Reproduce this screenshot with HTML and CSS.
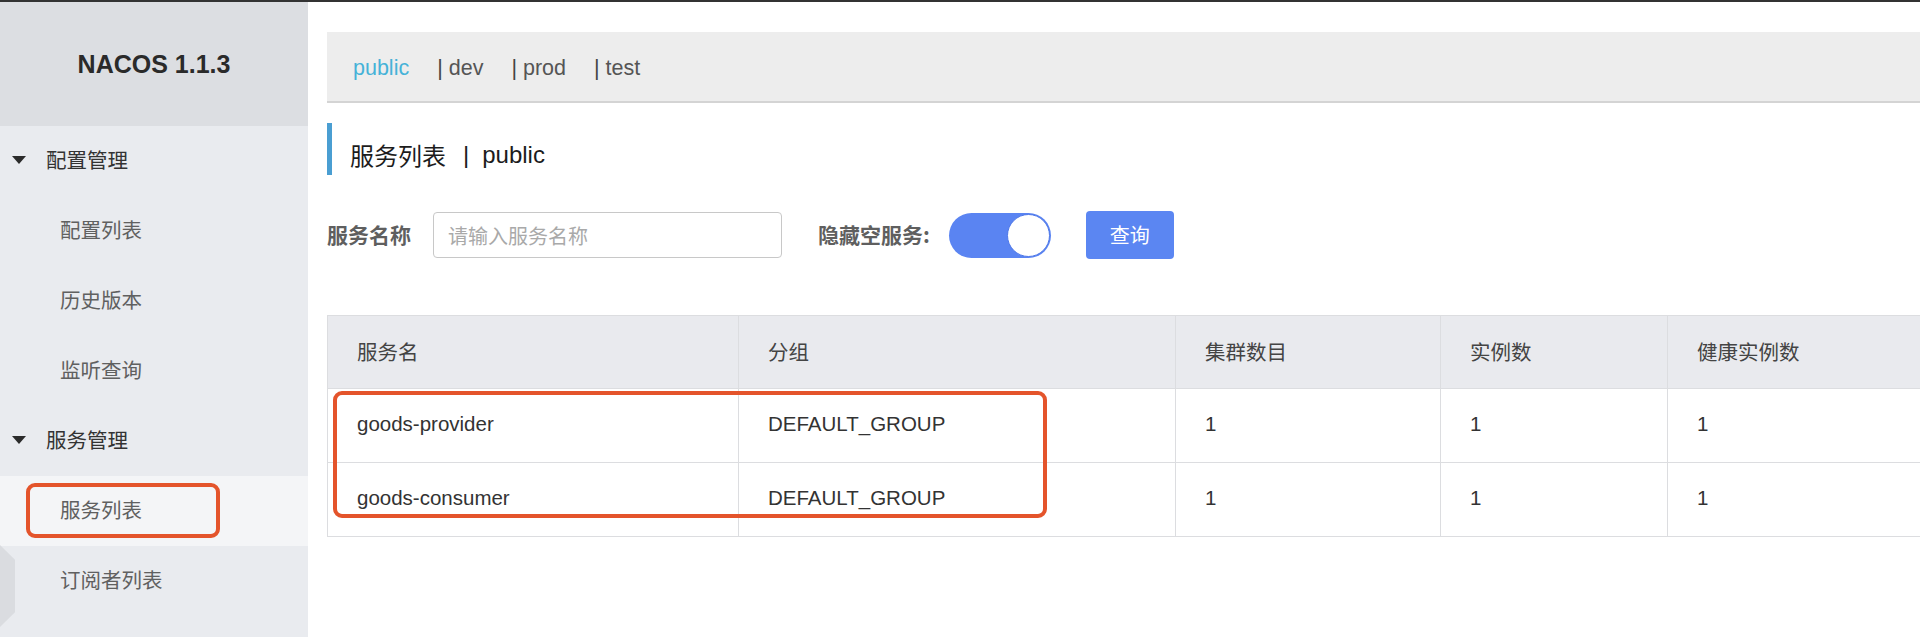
FILE: index.html
```html
<!DOCTYPE html>
<html lang="zh-CN">
<head>
<meta charset="utf-8">
<title>Nacos</title>
<link rel="stylesheet" href="styles.css">
</head>
<body>
<div class="topline"></div>
<div class="app">
  <aside class="sidebar">
    <div class="brand">NACOS 1.1.3</div>
    <ul class="menu">
      <li class="group"><span class="caret"></span>配置管理</li>
      <li class="item">配置列表</li>
      <li class="item">历史版本</li>
      <li class="item">监听查询</li>
      <li class="group"><span class="caret"></span>服务管理</li>
      <li class="item active">服务列表<span class="mark mark-side"></span></li>
      <li class="item">订阅者列表</li>
    </ul>
    <div class="handle"></div>
  </aside>
  <main class="main">
    <div class="ns-bar">
      <span class="ns active">public</span>
      <span class="ns"><span class="sep">|</span> dev</span>
      <span class="ns"><span class="sep">|</span> prod</span>
      <span class="ns"><span class="sep">|</span> test</span>
    </div>
    <h2 class="title"><span class="title-cn">服务列表</span><span class="title-sep">|</span><span class="title-ns">public</span></h2>
    <div class="search">
      <label class="label">服务名称</label>
      <div class="input"><span class="placeholder">请输入服务名称</span></div>
      <label class="label label-hide">隐藏空服务:</label>
      <div class="switch"><span class="knob"></span></div>
      <button class="btn">查询</button>
    </div>
    <div class="table-wrap">
      <table class="grid">
        <colgroup>
          <col class="c1"><col class="c2"><col class="c3"><col class="c4"><col class="c5">
        </colgroup>
        <thead>
          <tr><th>服务名</th><th>分组</th><th>集群数目</th><th>实例数</th><th>健康实例数</th></tr>
        </thead>
        <tbody>
          <tr><td>goods-provider</td><td>DEFAULT_GROUP</td><td>1</td><td>1</td><td>1</td></tr>
          <tr><td>goods-consumer</td><td>DEFAULT_GROUP</td><td>1</td><td>1</td><td>1</td></tr>
        </tbody>
      </table>
      <div class="mark mark-table"></div>
    </div>
  </main>
</div>
</body>
</html>
```
FILE: styles.css
```css
* { box-sizing: border-box; }
html, body {
  margin: 0;
  padding: 0;
  width: 1920px;
  height: 637px;
  overflow: hidden;
  background: #fff;
  font-family: "Liberation Sans", "Noto Sans CJK SC", sans-serif;
}
.topline {
  height: 2px;
  background: #333;
}
.app {
  display: flex;
  height: 635px;
}
.sidebar {
  position: relative;
  width: 308px;
  flex: none;
  background: #e9ebef;
}
.brand {
  height: 124px;
  background: #dcdee2;
  display: flex;
  align-items: center;
  justify-content: center;
  font-size: 25px;
  font-weight: bold;
  color: #2a2a2a;
}
.menu {
  list-style: none;
  margin: 0;
  padding: 0;
}
.menu li {
  height: 70px;
  display: flex;
  align-items: center;
  font-family: "Noto Sans CJK SC", sans-serif;
  font-size: 20.5px;
  position: relative;
  padding-bottom: 4px;
}
.group {
  padding-left: 12px;
  color: #333;
}
.caret {
  width: 0;
  height: 0;
  border-left: 7.5px solid transparent;
  border-right: 7.5px solid transparent;
  border-top: 8px solid #2b2b2b;
  margin-right: 20px;
  margin-top: 2px;
}
.item {
  padding-left: 60px;
  color: #606060;
}
.item.active {
  background: #f4f5f7;
}
.mark {
  position: absolute;
  border: 4px solid #e4542b;
  border-radius: 9px;
}
.mark-side {
  left: 26px;
  top: 7px;
  width: 194px;
  height: 55px;
}
.handle {
  position: absolute;
  left: 0;
  top: 543px;
  width: 15px;
  height: 82px;
  background: #dadce0;
  clip-path: polygon(0 0, 100% 18%, 100% 82%, 0 100%);
}
.main {
  flex: 1;
  min-width: 0;
  overflow: hidden;
  padding-left: 19px;
}
.ns-bar {
  margin-top: 30px;
  height: 71px;
  background: #ededed;
  border-bottom: 2px solid #d4d4d4;
  padding: 4px 0 0 26px;
  display: flex;
  align-items: center;
  font-size: 21.5px;
  color: #555;
}
.ns {
  margin-right: 28px;
}
.ns.active {
  color: #45b2d8;
}
.sep {
  color: #444;
}
.title {
  margin: 20px 0 0;
  height: 52px;
  border-left: 5px solid #4a9ed2;
  padding: 12px 0 0 18px;
  font-weight: normal;
  font-size: 24px;
  line-height: 40px;
  color: #1c1c1c;
  display: flex;
}
.title-cn {
  font-family: "Noto Sans CJK SC", sans-serif;
}
.title-sep {
  margin: 0 13px 0 17px;
}
.search {
  margin-top: 36px;
  height: 48px;
  display: flex;
  align-items: center;
}
.label {
  font-family: "Noto Sans CJK SC", sans-serif;
  font-weight: bold;
  font-size: 21px;
  color: #5f5f5f;
  padding-bottom: 2px;
}
.input {
  margin-left: 22px;
  width: 349px;
  height: 46px;
  border: 1px solid #c8c8c8;
  border-radius: 4px;
  display: flex;
  align-items: center;
  padding-left: 14px;
}
.placeholder {
  font-family: "Noto Sans CJK SC", sans-serif;
  font-size: 20px;
  color: #a9a9a9;
}
.label-hide {
  margin-left: 36px;
}
.switch {
  margin-left: 19px;
  width: 102px;
  height: 45px;
  border-radius: 23px;
  background: #5a84f2;
  display: flex;
  align-items: center;
  justify-content: flex-end;
  padding-right: 1px;
}
.knob {
  width: 43px;
  height: 43px;
  border-radius: 50%;
  background: #fff;
  border: 1px solid #4f78e8;
}
.btn {
  margin-left: 35px;
  width: 88px;
  height: 48px;
  border: none;
  border-radius: 4px;
  background: #5b86f2;
  color: #fff;
  font-family: "Noto Sans CJK SC", sans-serif;
  font-size: 20px;
  padding: 0 0 2px;
}
.table-wrap {
  position: relative;
  margin-top: 56px;
  width: 1700px;
}
.grid {
  width: 1700px;
  border-collapse: collapse;
  table-layout: fixed;
  border: 1px solid #dcdde0;
}
.c1 { width: 411px; }
.c2 { width: 437px; }
.c3 { width: 265px; }
.c4 { width: 227px; }
.c5 { width: 360px; }
.grid th, .grid td {
  border: 1px solid #dcdde0;
  text-align: left;
  padding: 0 0 3px 29px;
  font-weight: normal;
}
.grid th {
  height: 73px;
  background: #e9eaee;
  font-family: "Noto Sans CJK SC", sans-serif;
  font-size: 20.5px;
  color: #444;
}
.grid td {
  height: 74px;
  font-size: 20.5px;
  color: #333;
}
.mark-table {
  left: 6px;
  top: 76px;
  width: 714px;
  height: 127px;
}
```
